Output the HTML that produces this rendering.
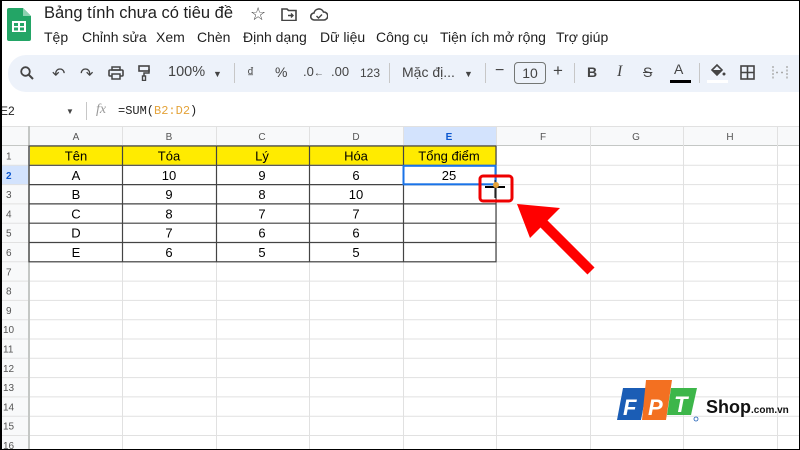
<!DOCTYPE html>
<html><head><meta charset="utf-8">
<style>
*{margin:0;padding:0;box-sizing:border-box}
body{width:800px;height:450px;overflow:hidden;background:#fff;font-family:"Liberation Sans",Arial,sans-serif;position:relative;color:#1f1f1f}
.abs{position:absolute;white-space:nowrap}
.title{left:44px;top:4px;font-size:16.5px;color:#1f1f1f}
.menu{top:29px;font-size:14px;color:#1f1f1f}
.tb{left:8px;top:55px;width:800px;height:37px;background:#edf2fa;border-radius:18px 0 0 18px}
.ti{top:64px;font-size:14px;color:#444}
.sep{top:63px;width:1px;height:20px;background:#c7c7c7}
</style></head><body>
<div style="position:absolute;inset:0;border:1px solid #000;border-left:2px solid #000;z-index:10;pointer-events:none"></div>
<svg class="abs" style="left:7px;top:8px" width="24" height="33" viewBox="0 0 24 33"><path d="M2 0h14l8 8v23a2 2 0 0 1-2 2H2a2 2 0 0 1-2-2V2a2 2 0 0 1 2-2z" fill="#23a566"/><path d="M16 0v8h8z" fill="#8ed1b1"/><rect x="5" y="13" width="14" height="11" fill="#fff"/><rect x="7" y="15" width="4" height="3" fill="#23a566"/><rect x="13" y="15" width="4" height="3" fill="#23a566"/><rect x="7" y="19.5" width="4" height="3" fill="#23a566"/><rect x="13" y="19.5" width="4" height="3" fill="#23a566"/></svg>
<div class="abs title">Bảng tính chưa có tiêu đề</div>
<div class="abs" style="left:250px;top:4px;font-size:18px;color:#444">☆</div>
<svg class="abs" style="left:281px;top:8px" width="16" height="13" viewBox="0 0 16 13"><path d="M1 1h5l1.5 1.5H15v10H1z" fill="none" stroke="#444" stroke-width="1.6"/><path d="M7 7.5h5M10 5.5l2 2-2 2" fill="none" stroke="#444" stroke-width="1.4"/></svg>
<svg class="abs" style="left:310px;top:8px" width="18" height="13" viewBox="0 0 18 13"><path d="M4.5 12a3.5 3.5 0 0 1-.5-7A5 5 0 0 1 13.5 4 4 4 0 0 1 14 12z" fill="none" stroke="#444" stroke-width="1.6"/><path d="M6.5 8l2 2 3.5-3.5" fill="none" stroke="#444" stroke-width="1.4"/></svg>
<div class="abs menu" style="left:44px">Tệp</div>
<div class="abs menu" style="left:82px">Chỉnh sửa</div>
<div class="abs menu" style="left:156px">Xem</div>
<div class="abs menu" style="left:197px">Chèn</div>
<div class="abs menu" style="left:243px">Định dạng</div>
<div class="abs menu" style="left:320px">Dữ liệu</div>
<div class="abs menu" style="left:376px">Công cụ</div>
<div class="abs menu" style="left:440px">Tiện ích mở rộng</div>
<div class="abs menu" style="left:556px">Trợ giúp</div>
<div class="abs tb"></div>
<svg class="abs" style="left:20px;top:66px" width="14" height="14" viewBox="0 0 14 14"><circle cx="5.5" cy="5.5" r="4.3" fill="none" stroke="#444" stroke-width="1.8"/><path d="M8.5 8.5L13 13" stroke="#444" stroke-width="2"/></svg>
<div class="abs ti" style="left:52px;font-size:16px">↶</div>
<div class="abs ti" style="left:80px;font-size:16px">↷</div>
<svg class="abs" style="left:108px;top:66px" width="16" height="14" viewBox="0 0 16 14"><rect x="4" y="1" width="8" height="3" fill="none" stroke="#444" stroke-width="1.5"/><rect x="1" y="4" width="14" height="6" rx="1" fill="none" stroke="#444" stroke-width="1.6"/><rect x="4" y="8" width="8" height="5" fill="#edf2fa" stroke="#444" stroke-width="1.5"/></svg>
<svg class="abs" style="left:138px;top:65px" width="12" height="16" viewBox="0 0 12 16"><rect x="1" y="1" width="10" height="5" fill="none" stroke="#444" stroke-width="1.6"/><path d="M11 4v4H6v3" fill="none" stroke="#444" stroke-width="1.5"/><rect x="4.5" y="11" width="3" height="4.5" fill="none" stroke="#444" stroke-width="1.4"/></svg>
<div class="abs ti" style="left:168px;font-size:14.5px">100%</div>
<div class="abs ti" style="left:213px;font-size:9px;top:69px">▼</div>
<div class="abs sep" style="left:234px"></div>
<div class="abs ti" style="left:247px">₫</div>
<div class="abs ti" style="left:275px">%</div>
<div class="abs ti" style="left:303px;font-size:13px">.0<span style="font-size:10px">←</span></div>
<div class="abs ti" style="left:331px;font-size:13px">.00</div>
<div class="abs ti" style="left:360px;font-size:12px;top:66px">123</div>
<div class="abs sep" style="left:389px"></div>
<div class="abs ti" style="left:402px">Mặc đị...</div>
<div class="abs ti" style="left:464px;font-size:9px;top:69px">▼</div>
<div class="abs sep" style="left:485px"></div>
<div class="abs ti" style="left:495px;font-size:16px;top:62px">−</div>
<div class="abs" style="left:514px;top:62px;width:32px;height:22px;border:1px solid #747775;border-radius:4px;text-align:center;font-size:14px;line-height:20px;color:#444">10</div>
<div class="abs ti" style="left:553px;font-size:17px;top:61px">+</div>
<div class="abs sep" style="left:574px"></div>
<div class="abs ti" style="left:587px;font-weight:bold">B</div>
<div class="abs ti" style="left:617px;font-style:italic;font-family:'Liberation Serif',serif;font-size:16px;top:63px">I</div>
<div class="abs ti" style="left:643px;text-decoration:line-through">S</div>
<div class="abs ti" style="left:674px;top:61px">A</div>
<div class="abs" style="left:670px;top:80px;width:21px;height:3px;background:#000"></div>
<div class="abs sep" style="left:699px"></div>
<svg class="abs" style="left:709px;top:63px" width="18" height="16" viewBox="0 0 18 16"><path d="M3 7l5-5 5 5-5 5z" fill="none" stroke="#444" stroke-width="1.6"/><path d="M3 7h10l-5 5z" fill="#444"/><circle cx="15" cy="11" r="1.5" fill="#444"/></svg>
<div class="abs" style="left:707px;top:80px;width:21px;height:3px;background:#fff"></div>
<svg class="abs" style="left:740px;top:65px" width="15" height="15" viewBox="0 0 15 15"><rect x="1" y="1" width="13" height="13" fill="none" stroke="#444" stroke-width="1.6"/><path d="M7.5 1v13M1 7.5h13" stroke="#444" stroke-width="1.6"/></svg>
<svg class="abs" style="left:772px;top:65px" width="16" height="15" viewBox="0 0 16 15"><path d="M1 1v13M15 1v13M4 7.5h3M9 7.5h3" stroke="#aaa" stroke-width="1.4" stroke-dasharray="2 1.5"/></svg>
<div class="abs" style="left:0;top:104px;font-size:12px;color:#1f1f1f">E2</div>
<div class="abs" style="left:66px;top:107px;font-size:8px;color:#444">▼</div>
<div class="abs" style="left:86px;top:102px;width:1px;height:18px;background:#c7c7c7"></div>
<div class="abs" style="left:96px;top:102px;font-size:14px;font-style:italic;font-family:'Liberation Serif',serif;color:#999">fx</div>
<div class="abs" style="left:118px;top:104px;font-size:12px;font-family:'Liberation Mono',monospace;color:#1f1f1f">=SUM(<span style="color:#e4a33a">B2:D2</span>)</div>
<svg class="abs" style="left:0;top:0" width="800" height="450" viewBox="0 0 800 450" font-family="Liberation Sans, Arial, sans-serif">
<rect x="0" y="126" width="800" height="20" fill="#f8f9fa"/>
<rect x="0" y="146" width="29" height="304" fill="#f8f9fa"/>
<rect x="403" y="126" width="93" height="20" fill="#d3e3fd"/>
<rect x="0" y="165.3" width="29" height="19.3" fill="#d3e3fd"/>
<rect x="29" y="146" width="467" height="19.3" fill="#ffeb00"/>
<g stroke="#e1e1e1" stroke-width="1">
<line x1="0" y1="126.5" x2="800" y2="126.5"/>
<line x1="0" y1="145.5" x2="800" y2="145.5" stroke="#c4c7c5"/>
<line x1="122.5" y1="126" x2="122.5" y2="450"/><line x1="216.5" y1="126" x2="216.5" y2="450"/><line x1="309.5" y1="126" x2="309.5" y2="450"/><line x1="403.5" y1="126" x2="403.5" y2="450"/><line x1="496.5" y1="126" x2="496.5" y2="450"/><line x1="590.5" y1="126" x2="590.5" y2="450"/><line x1="683.5" y1="126" x2="683.5" y2="450"/><line x1="777.5" y1="126" x2="777.5" y2="450"/>
<line x1="0" y1="165.3" x2="800" y2="165.3"/>
<line x1="0" y1="184.6" x2="800" y2="184.6"/><line x1="0" y1="203.9" x2="800" y2="203.9"/><line x1="0" y1="223.2" x2="800" y2="223.2"/><line x1="0" y1="242.5" x2="800" y2="242.5"/><line x1="0" y1="261.8" x2="800" y2="261.8"/><line x1="0" y1="281.1" x2="800" y2="281.1"/><line x1="0" y1="300.4" x2="800" y2="300.4"/><line x1="0" y1="319.7" x2="800" y2="319.7"/><line x1="0" y1="339" x2="800" y2="339"/><line x1="0" y1="358.3" x2="800" y2="358.3"/><line x1="0" y1="377.6" x2="800" y2="377.6"/><line x1="0" y1="396.9" x2="800" y2="396.9"/><line x1="0" y1="416.2" x2="800" y2="416.2"/><line x1="0" y1="435.5" x2="800" y2="435.5"/>
</g>
<line x1="29" y1="126" x2="29" y2="450" stroke="#c4c7c5" stroke-width="2"/>
<g stroke="#444" stroke-width="1.2" fill="none">
<rect x="29" y="146" width="467" height="115.8"/>
<line x1="122.5" y1="146" x2="122.5" y2="261.8"/><line x1="216.5" y1="146" x2="216.5" y2="261.8"/><line x1="309.5" y1="146" x2="309.5" y2="261.8"/><line x1="403.5" y1="146" x2="403.5" y2="261.8"/>
<line x1="29" y1="165.3" x2="496" y2="165.3"/><line x1="29" y1="184.6" x2="496" y2="184.6"/><line x1="29" y1="203.9" x2="496" y2="203.9"/><line x1="29" y1="223.2" x2="496" y2="223.2"/><line x1="29" y1="242.5" x2="496" y2="242.5"/>
</g>
<rect x="403.5" y="165.8" width="92" height="18.5" fill="none" stroke="#1a73e8" stroke-width="2"/>
<g font-size="10" fill="#555" text-anchor="middle">
<text x="76" y="140">A</text><text x="169" y="140">B</text><text x="262" y="140">C</text><text x="356" y="140">D</text><text x="449" y="140" font-weight="bold" fill="#0b57d0">E</text><text x="543" y="140">F</text><text x="636" y="140">G</text><text x="730" y="140">H</text>
</g>
<g font-size="10" fill="#555">
<text x="6" y="159.5">1</text><text x="6" y="178.8" font-weight="bold" fill="#0b57d0">2</text><text x="6" y="198">3</text><text x="6" y="217.4">4</text><text x="6" y="236.7">5</text><text x="6" y="256">6</text><text x="6" y="275.3">7</text><text x="6" y="294.6">8</text><text x="6" y="313.9">9</text><text x="3" y="333.2">10</text><text x="3" y="352.5">11</text><text x="3" y="371.8">12</text><text x="3" y="391.1">13</text><text x="3" y="410.4">14</text><text x="3" y="429.7">15</text><text x="3" y="449">16</text>
</g>
<g font-size="13" fill="#000" text-anchor="middle">
<text x="76" y="160.5">Tên</text><text x="169" y="160.5">Tóa</text><text x="262" y="160.5">Lý</text><text x="356" y="160.5">Hóa</text><text x="449" y="160.5">Tổng điểm</text>
<text x="76" y="179.8">A</text><text x="169" y="179.8">10</text><text x="262" y="179.8">9</text><text x="356" y="179.8">6</text><text x="449" y="179.8">25</text>
<text x="76" y="199.1">B</text><text x="169" y="199.1">9</text><text x="262" y="199.1">8</text><text x="356" y="199.1">10</text>
<text x="76" y="218.4">C</text><text x="169" y="218.4">8</text><text x="262" y="218.4">7</text><text x="356" y="218.4">7</text>
<text x="76" y="237.7">D</text><text x="169" y="237.7">7</text><text x="262" y="237.7">6</text><text x="356" y="237.7">6</text>
<text x="76" y="257">E</text><text x="169" y="257">6</text><text x="262" y="257">5</text><text x="356" y="257">5</text>
</g>
<line x1="485" y1="187" x2="505" y2="187" stroke="#000" stroke-width="2"/>
<line x1="495" y1="180" x2="495" y2="198" stroke="#000" stroke-width="1"/>
<circle cx="496" cy="185" r="3" fill="#e4a33a"/>
<rect x="480" y="176" width="32" height="25" rx="3" fill="none" stroke="#e00" stroke-width="3"/>
<path d="M591 271L540 220" stroke="#f00" stroke-width="10"/>
<path d="M517 204L560 208L546 222L530 238Z" fill="#f00"/>
<path d="M623 388h24l-6 32h-24z" fill="#1b5db5"/>
<path d="M646 380h26l-6 40h-24z" fill="#f37021"/>
<path d="M671 388h26l-6 27h-24z" fill="#3db64a"/>
<text x="623" y="415" font-size="22" font-weight="bold" font-style="italic" fill="#fff">F</text>
<text x="648" y="415" font-size="22" font-weight="bold" font-style="italic" fill="#fff">P</text>
<text x="674" y="412" font-size="22" font-weight="bold" font-style="italic" fill="#fff">T</text>
<circle cx="696" cy="419" r="2" fill="none" stroke="#1b5db5" stroke-width="0.8"/>
<text x="706" y="413" font-size="18" font-weight="bold" fill="#111">Shop<tspan font-size="10">.com.vn</tspan></text>
</svg>
</body></html>
